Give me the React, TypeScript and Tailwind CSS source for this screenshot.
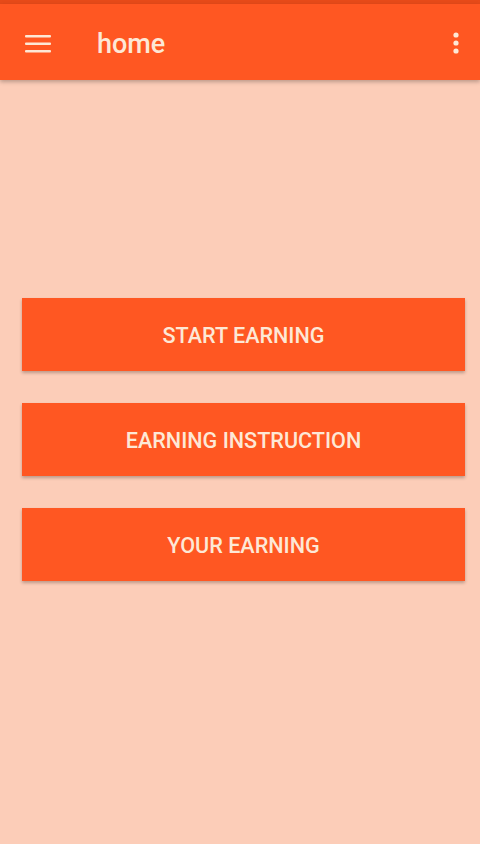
export default function App() {
  const buttons = ['START EARNING', 'EARNING INSTRUCTION', 'YOUR EARNING'];
  return (
    <div className="flex h-[844px] w-[480px] flex-col bg-[#fccdb8] font-['Roboto',sans-serif]">
      <div className="h-[4px] bg-[#e64a19]" />
      <header className="flex h-[76px] items-center bg-[#ff5722] shadow-[0_2px_4px_rgba(0,0,0,0.25)]">
        <div className="flex w-[97px] pl-[25px] pt-[3px]">
          <svg width="26" height="18" viewBox="0 0 26 18" fill="#fde8d6">
            <rect x="0" y="0" width="26" height="2.5" rx="1" />
            <rect x="0" y="7.5" width="26" height="2.5" rx="1" />
            <rect x="0" y="15" width="26" height="2.5" rx="1" />
          </svg>
        </div>
        <h1 className="flex-1 pt-[4px] text-[27px] font-medium text-[#fde8d6]">home</h1>
        <div className="flex w-[46px] justify-center pr-[2px] pt-[2px]">
          <svg width="6" height="22" viewBox="0 0 6 22" fill="#fde8d6">
            <circle cx="3" cy="3" r="2.6" />
            <circle cx="3" cy="11" r="2.6" />
            <circle cx="3" cy="19" r="2.6" />
          </svg>
        </div>
      </header>
      <main className="flex flex-col gap-[32px] pl-[22px] pr-[15px] pt-[218px]">
        {buttons.map((b) => (
          <button
            key={b}
            className="flex h-[73px] items-center justify-center bg-[#ff5722] pt-[3px] text-[21.6px] font-medium text-[#fde8d6] shadow-[0_2px_3px_rgba(0,0,0,0.25)]"
          >
            {b}
          </button>
        ))}
      </main>
    </div>
  );
}
